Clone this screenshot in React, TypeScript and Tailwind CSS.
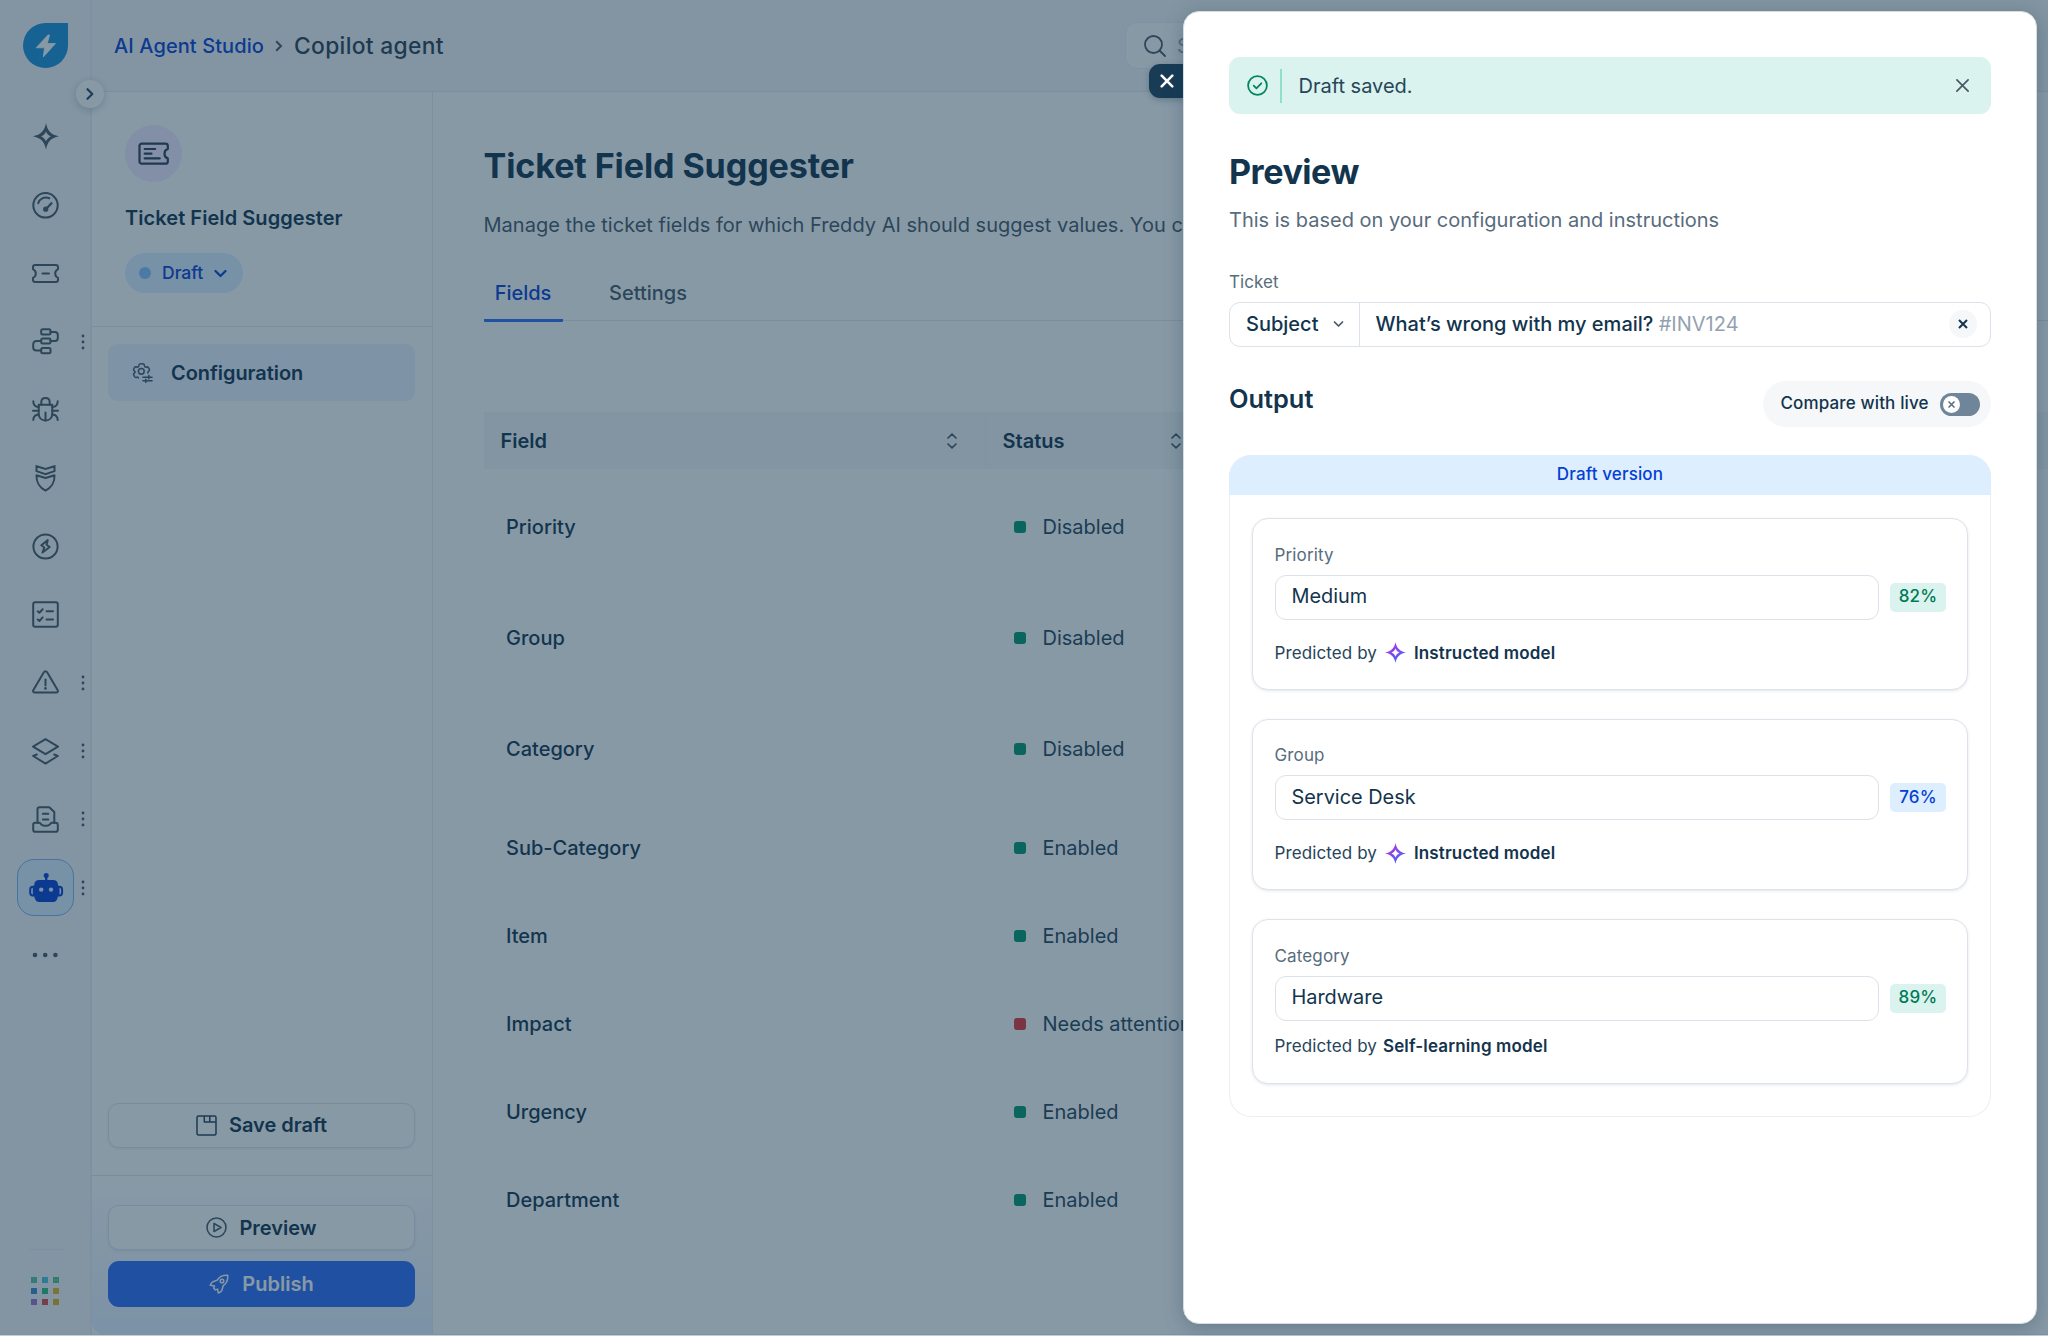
import React from "react";

type IconProps = { className?: string };

function Svg({
  size = 27,
  sw = 2,
  className = "",
  children,
}: {
  size?: number;
  sw?: number;
  className?: string;
  children: React.ReactNode;
}) {
  return (
    <svg
      width={size}
      height={size}
      viewBox={`0 0 ${size} ${size}`}
      fill="none"
      stroke="currentColor"
      strokeWidth={sw}
      strokeLinecap="round"
      strokeLinejoin="round"
      className={`shrink-0 ${className}`}
    >
      {children}
    </svg>
  );
}

const SparkleIcon = () => (
  <Svg>
    <path
      d="M14 0c1.500 8 5 11.800 13.200 13.300-8.200 1.600-11.700 5.400-13.200 13.400C12.500 18.700 9 14.900.8 13.300 9 11.800 12.500 8 14 0zM14 8.500c-1 2.400-2.500 3.900-4.900 4.900 2.400 1 3.900 2.500 4.900 4.900 1-2.400 2.500-3.900 4.900-4.900-2.400-1-3.900-2.500-4.900-4.900z"
      fill="currentColor"
      fillRule="evenodd"
      stroke="none"
    />
  </Svg>
);

const GaugeIcon = () => (
  <Svg>
    <circle cx="13.500" cy="13.300" r="12.200" />
    <path d="M6.200 11.200C7.300 7 12.200 4.300 17.300 6.200" />
    <path d="M14 17l5.500-5.700" strokeWidth="2.300" />
    <circle cx="13.700" cy="17.200" r="2.600" fill="currentColor" stroke="none" />
  </Svg>
);

const TicketIcon = () => (
  <Svg>
    <path d="M3.200 5h20.600c1.300 0 2.200.9 2.200 2.200v1.900c-1.800.9-2.800 2.500-2.800 4.400s1 3.500 2.800 4.400v1.900c0 1.300-.9 2.200-2.200 2.200H3.200C1.900 22 1 21.100 1 19.800v-1.900c1.800-.9 2.800-2.500 2.800-4.400S2.800 10 1 9.100V7.200C1 5.900 1.900 5 3.200 5z" />
    <path d="M10.500 13.500h6.500" />
  </Svg>
);

const WorkflowIcon = () => (
  <Svg>
    <rect x="9.200" y="1.200" width="9.300" height="5.400" rx="1.500" />
    <rect x="9.200" y="10.600" width="9.300" height="5" rx="1.500" />
    <rect x="9.200" y="19.900" width="9.300" height="5.400" rx="1.500" />
    <path d="M18.500 3.900h4.300c1.800 0 3 1.200 3 3v3.200c0 1.800-1.200 3-3 3h-4.300M9.200 13.100H4.500c-2 0-3.300 1.300-3.300 3.300v2.900c0 2 1.300 3.300 3.300 3.300h4.700" />
  </Svg>
);

const BugIcon = () => (
  <Svg>
    <path d="M6.700 8.700h13.600v9c0 4.100-2.900 6.800-6.800 6.800s-6.800-2.700-6.800-6.800z" />
    <path d="M9.300 8.700V6.300c0-2.600 1.700-4.300 4.200-4.300s4.200 1.700 4.200 4.300v2.400" />
    <path d="M13.500 16.500v8M1.300 5.200c0 3.500 2 5.600 5.400 5.900M25.700 5.200c0 3.500-2 5.600-5.400 5.900M1 14.800h5.700M20.300 14.800H26M1.300 24c0-3.200 1.900-5.300 5.400-5.600M25.700 24c0-3.200-1.900-5.300-5.400-5.600" />
  </Svg>
);

const ShieldIcon = () => (
  <Svg>
    <path d="M4.500 1.200L13.500 4l9-2.800v4.900l-9 3-9-3z" strokeLinejoin="miter" />
    <path d="M4.500 10.300l9 2.700 9-2.700c.4 7-3.400 12.700-9 15.300-5.600-2.600-9.400-8.300-9-15.300z" />
  </Svg>
);

const BoltCircleIcon = () => (
  <Svg>
    <circle cx="13.500" cy="13.500" r="12.100" />
    <path d="M15.800 7.100L9.300 12.300l3 2.200-1.800 5 7.200-5.500-3.200-2.200z" />
  </Svg>
);

const ChecklistIcon = () => (
  <Svg>
    <rect x="1.200" y="1.200" width="24.600" height="24.600" rx="2" />
    <path d="M5.700 10.300l1.700 1.500 3.300-3.600M5.700 18.500l1.700 1.500 3.300-3.600M14.500 10.300h6.500M14.500 18.500h6.500" />
  </Svg>
);

const WarningIcon = () => (
  <Svg>
    <path d="M15.300 3.400l10.300 17.500c.8 1.400.1 2.600-1.500 2.600H2.900c-1.600 0-2.300-1.200-1.500-2.600L11.700 3.400c.9-1.500 2.700-1.500 3.600 0z" />
    <path d="M13.500 10.400v6" />
    <circle cx="13.500" cy="19.400" r="1.300" fill="currentColor" stroke="none" />
  </Svg>
);

const LayersIcon = () => (
  <Svg>
    <path d="M13.500 1.200L26 8.700l-12.500 7.500L1 8.700z" />
    <path d="M4.800 16.500L1.200 18l12.300 7.600L25.800 18l-3.600-1.500" />
  </Svg>
);

const TrayIcon = () => (
  <Svg>
    <path d="M5.500 17V3.400C5.500 2 6.300 1.200 7.600 1.200h9.700l5 4.800v11" />
    <path d="M3.300 16.800h4.500c1.500 2 2.500 3 4.500 3h2.500c2 0 3-1 4.500-3h4.400c1.300 0 2.100.8 2.100 2.100v4.800c0 1.300-.8 2.100-2.100 2.100H3.300c-1.300 0-2.100-.8-2.100-2.100v-4.800c0-1.300.8-2.100 2.100-2.100z" />
    <path d="M10.800 7.800h5.500M10.800 13.500h5.500" />
  </Svg>
);

const RobotIcon = () => (
  <svg width="36" height="36" viewBox="0 0 36 36" fill="none" className="shrink-0">
    <circle cx="18.200" cy="5.500" r="2.500" fill="#0440D2" />
    <path d="M18.200 6v6" stroke="#0440D2" strokeWidth="2.400" />
    <path d="M6 16.800H4.800c-1.400 0-2.600 1.100-2.600 2.600v3.400c0 1.400 1.200 2.600 2.600 2.600H6M30.300 16.800h1.200c1.400 0 2.600 1.100 2.600 2.600v3.400c0 1.400-1.200 2.600-2.600 2.600h-1.200" stroke="#0440D2" strokeWidth="2" />
    <path d="M11.200 10h13.900c3 0 4.900 2 4.900 4.700v.8c.9.300 1.500 1 1.500 2v7c0 1-.6 1.700-1.500 2l-.8 2.500c-.7 2-2 3-4 3H11.100c-2 0-3.300-1-4-3l-.8-2.500c-.900-.300-1.500-1-1.500-2v-7c0-1 .6-1.700 1.500-2v-.8C6.300 12 8.200 10 11.200 10z" fill="#0440D2" />
    <circle cx="13.200" cy="19.600" r="2.200" fill="#DDEEFF" />
    <circle cx="23" cy="19.600" r="2.200" fill="#DDEEFF" />
  </svg>
);

const railItems: { icon: React.ReactNode; more?: boolean; active?: boolean }[] = [
  { icon: <SparkleIcon /> },
  { icon: <GaugeIcon /> },
  { icon: <TicketIcon /> },
  { icon: <WorkflowIcon />, more: true },
  { icon: <BugIcon /> },
  { icon: <ShieldIcon /> },
  { icon: <BoltCircleIcon /> },
  { icon: <ChecklistIcon /> },
  { icon: <WarningIcon />, more: true },
  { icon: <LayersIcon />, more: true },
  { icon: <TrayIcon />, more: true },
  { icon: <RobotIcon />, more: true, active: true },
];

const appColors = [
  "bg-[#56C4A4]",
  "bg-[#48C3E4]",
  "bg-[#56C48A]",
  "bg-[#3A88CF]",
  "bg-[#2FBE7E]",
  "bg-[#E5B41C]",
  "bg-[#9E70CE]",
  "bg-[#E0484A]",
  "bg-[#E5AE1C]",
];

function Rail() {
  return (
    <div className="relative flex h-full w-[92px] shrink-0 flex-col border-r-2 border-[#EBEEF5] bg-[#F5F7F7] text-[#475867]">
      <div className="pl-[23px] pt-[23px]">
        <div className="flex h-[45px] w-[45px] items-center justify-center rounded-full rounded-tr-[5px] bg-[#1A90D8]">
          <svg width="22" height="24" viewBox="0 0 22 24">
            <path d="M13 1L1.200 13.800h8.300L8.300 23 20.500 9.500h-8.200L14.500 1z" fill="#fff" stroke="#fff" strokeWidth=".8" strokeLinejoin="round" />
          </svg>
        </div>
      </div>
      <div className="mt-[34.700px]">
        {railItems.map((item, i) => (
          <div key={i} className="relative flex h-[68.270px] items-center pl-[17px]">
            <div
              className={
                item.active
                  ? "flex h-[57px] w-[57px] items-center justify-center rounded-[17px] border border-[#78B4F5] bg-[#DDEEFF]"
                  : "flex h-[57px] w-[57px] items-center justify-center"
              }
            >
              {item.icon}
            </div>
            {item.more && (
              <svg width="4" height="16" viewBox="0 0 4 16" className="ml-[6.500px]">
                <circle cx="2" cy="2" r="1.400" fill="#475867" />
                <circle cx="2" cy="8" r="1.400" fill="#475867" />
                <circle cx="2" cy="14" r="1.400" fill="#475867" />
              </svg>
            )}
          </div>
        ))}
        <div className="flex h-[67px] items-center pl-[32px]">
          <svg width="27" height="6" viewBox="0 0 27 6">
            <circle cx="3" cy="3" r="2.300" fill="#475867" />
            <circle cx="13.200" cy="3" r="2.300" fill="#475867" />
            <circle cx="23.400" cy="3" r="2.300" fill="#475867" />
          </svg>
        </div>
      </div>
      <div className="mb-[30px] mt-auto">
        <div className="ml-[29px] h-px w-[34px] bg-[#E6EBF5]" />
        <div className="ml-[31px] mt-[27px] grid w-[28px] grid-cols-3 gap-[5px]">
          {appColors.map((c, i) => (
            <div key={i} className={`h-[6px] w-[6px] ${c}`} />
          ))}
        </div>
      </div>
      {/* expand handle */}
      <div className="absolute left-[76px] top-[80px] z-10 flex h-[28px] w-[28px] items-center justify-center rounded-full bg-white shadow-[0_2px_8px_rgba(18,52,77,0.25)]">
        <svg width="8" height="12" viewBox="0 0 8 12" fill="none" stroke="#264966" strokeWidth="2.200" strokeLinecap="round" strokeLinejoin="round">
          <path d="M1.500 1.200L6.300 6l-4.800 4.800" />
        </svg>
      </div>
    </div>
  );
}

function Header() {
  return (
    <div className="flex h-[92px] shrink-0 items-center border-b border-[#E6EAF2] bg-[#F5F7F7] pl-[22px]">
      <span className="text-[20px] font-medium leading-[28px] tracking-[0.005em] text-[#0440D2]">AI Agent Studio</span>
      <svg width="8" height="12" viewBox="0 0 8 12" fill="none" stroke="#475867" strokeWidth="2" className="ml-[11px]">
        <path d="M1.200 1.200L6 6l-4.800 4.800" />
      </svg>
      <span className="ml-[11px] text-[22.800px] font-medium leading-[28px] tracking-[0.014em] text-[#2A3F52]">Copilot agent</span>
      <div className="ml-auto mr-[501px] flex h-[47px] w-[422px] items-center rounded-[12px] border border-[#EBEFF3] bg-white pl-[18px]">
        <svg width="22" height="22" viewBox="0 0 22 22" fill="none" stroke="#475867" strokeWidth="1.800" strokeLinecap="round">
          <circle cx="9.500" cy="9.500" r="8.500" />
          <path d="M15.500 15.500L21 21" />
        </svg>
        <span className="ml-[11px] text-[20px] text-[#92A2B1]">Search</span>
      </div>
    </div>
  );
}

function Sidebar() {
  return (
    <div className="flex w-[341px] shrink-0 flex-col border-r border-[#E6EAF2]">
      <div className="h-[235px] shrink-0 border-b border-[#E3E8F1] pl-[33px] pt-[33px]">
        <div className="flex h-[57px] w-[57px] items-center justify-center rounded-full bg-[#F2EBFF]">
          <svg width="32" height="24" viewBox="0 0 32 24" fill="none" stroke="#2A3F52" strokeWidth="2.200" strokeLinecap="round" strokeLinejoin="round">
            <path d="M3.900 1.700h23.500c1.500 0 2.400.9 2.400 2.300v3c-2.200.7-3.300 2.500-3.300 4.700s1.100 4 3.300 4.700v3c0 1.400-.9 2.300-2.400 2.300H3.900c-1.500 0-2.400-.9-2.400-2.300V4c0-1.400.9-2.300 2.400-2.300z" />
            <path d="M6.700 7h10.500M6.700 11.700h6.800M6.700 16.400h15" />
          </svg>
        </div>
        <div className="mt-[22px] text-[20px] font-semibold leading-[28px] tracking-[0.003em] text-[#12344D]">Ticket Field Suggester</div>
        <div className="mt-[21px] flex h-[40px] w-[118px] items-center rounded-full bg-[#DDEEFF] pl-[14px]">
          <div className="h-[12px] w-[12px] rounded-full bg-[#86BFFC]" />
          <span className="ml-[11px] text-[17.500px] font-medium leading-[20px] text-[#0440D2]">Draft</span>
          <svg width="13" height="9" viewBox="0 0 13 9" fill="none" stroke="#0440D2" strokeWidth="2.200" strokeLinecap="round" strokeLinejoin="round" className="ml-[11px]">
            <path d="M1.500 2l5 5 5-5" />
          </svg>
        </div>
      </div>
      <div className="flex grow flex-col pl-4 pr-[17px] pt-[17px]">
        <div className="flex h-[57px] items-center rounded-[9px] bg-[#EAF2FF] pl-[24px]">
          <svg width="21" height="21" viewBox="0 0 21 21" fill="none" stroke="#475867" strokeWidth="1.500" strokeLinecap="round" strokeLinejoin="round">
            <path d="M15.900 11c-.3-.8.1-1.500.8-1.900.8-.400 1-1.200.6-1.900l-.9-1.600c-.4-.7-1.200-.9-2-.5-.8.400-1.700-.1-1.800-1.100-.1-1.300-.8-2.200-2-2.200h-1.900c-1.200 0-1.800.7-1.900 1.900-.1 1-1 1.700-1.900 1.300-1-.5-1.900-.3-2.400.5l-.7 1.300c-.5.9-.2 1.700.6 2.200.9.500.9 1.500 0 2-.9.500-1.100 1.400-.6 2.200l.8 1.400c.5.800 1.200 1 2.200.6.600-.3 1.300.2 1.600.8" />
            <circle cx="9.300" cy="9.300" r="2.900" />
            <path d="M11 15.200h9M11 18.800h9M16.800 13.500v3.300M13.800 17.200v3.200" />
          </svg>
          <span className="ml-[18px] text-[19.900px] font-semibold leading-[28px] text-[#12344D]">Configuration</span>
        </div>
        <button className="mb-[27.500px] mt-auto flex h-[45px] items-center justify-center rounded-[11px] border border-[#DFE5EC] bg-white text-[20px] font-semibold text-[#12344D] shadow-[0_1px_3px_rgba(18,52,77,0.1)]">
          <svg width="21" height="21" viewBox="0 0 21 21" fill="none" stroke="#2A3F52" strokeWidth="1.500" strokeLinejoin="round">
            <rect x="1" y="1" width="19" height="19" rx="1.500" />
            <path d="M8.300 1v6H20M13.800 1v6" />
          </svg>
          <span className="ml-[12px]">Save draft</span>
        </button>
      </div>
      <div className="flex h-[159px] shrink-0 flex-col rounded-bl-[12px] border-t border-[#DCE5EE] bg-gradient-to-b from-white to-[#E6F0FF] pl-4 pr-[17px] pt-[29px]">
        <button className="flex h-[45px] shrink-0 items-center justify-center rounded-[11px] border border-[#DFE5EC] bg-white text-[20px] font-semibold text-[#12344D] shadow-[0_1px_3px_rgba(18,52,77,0.1)]">
          <svg width="21" height="21" viewBox="0 0 21 21" fill="none" stroke="#475867" strokeWidth="1.600" strokeLinejoin="round">
            <circle cx="10.500" cy="10.500" r="9.500" />
            <path d="M8 6.500v8l7-4z" />
          </svg>
          <span className="ml-[12px]">Preview</span>
        </button>
        <button className="mt-[11px] flex h-[46px] shrink-0 items-center justify-center rounded-[11px] bg-[#2C6CF5] text-[20px] font-semibold text-white">
          <svg width="20" height="20" viewBox="0 0 20 20" fill="none" stroke="#fff" strokeWidth="1.500" strokeLinecap="round" strokeLinejoin="round">
            <path d="M18.700 1.300c-4.400-.3-8 .9-10.500 4.800L4 7.700c-1.300.7-2.300 2-2.700 3.600l4.200.6-.8 2.300 1.700 1.700 2.200-.8.600 3.900c1.700-.4 3-1.400 3.700-2.700l1.300-4.600c3.700-2.500 4.900-5.900 4.500-10.400z" />
            <circle cx="13" cy="7" r="1.800" />
          </svg>
          <span className="ml-[13px]">Publish</span>
        </button>
      </div>
    </div>
  );
}

const SortIcon = ({ className }: IconProps) => (
  <svg width="12" height="16" viewBox="0 0 12 16" fill="none" stroke="#475867" strokeWidth="1.700" strokeLinecap="round" strokeLinejoin="round" className={`shrink-0 ${className}`}>
    <path d="M2 5l4-3.800L10 5M2 11l4 3.800 4-3.800" />
  </svg>
);

const fieldRows = [
  { name: "Priority", status: "Disabled", tall: true },
  { name: "Group", status: "Disabled", tall: true },
  { name: "Category", status: "Disabled", tall: true },
  { name: "Sub-Category", status: "Enabled" },
  { name: "Item", status: "Enabled" },
  { name: "Impact", status: "Needs attention", alert: true },
  { name: "Urgency", status: "Enabled" },
  { name: "Department", status: "Enabled" },
];

function Main() {
  return (
    <div className="min-w-0 grow overflow-hidden pl-[50.500px] pt-[52px]">
      <h1 className="text-[34.100px] font-bold leading-[44px] tracking-[-0.003em] text-[#12344D]">Ticket Field Suggester</h1>
      <p className="mt-[23px] whitespace-nowrap text-[20px] leading-[28px] tracking-[0.001em] text-[#475867]">
        Manage the ticket fields for which Freddy AI should suggest values. You can
      </p>
      <div className="mt-[32px] flex h-[50px] border-b border-[#E3E8EE] text-[20px] leading-[28px]">
        <div className="mb-[-1.500px] h-[51px] w-[79px] rounded-b-[1px] border-b-3 border-[#2C6CF5] pt-[8px] text-center font-medium text-[#0440D2]">
          Fields
        </div>
        <div className="ml-[46.500px] pt-[8px] font-medium text-[#475867]">Settings</div>
      </div>
      <div className="mt-[91px] flex h-[57px] items-center bg-[#F5F7F7] text-[20px] font-semibold text-[#12344D]">
        <div className="flex h-full w-[502px] items-center border-r border-[#EFF2F4] pl-[17px]">
          Field
          <SortIcon className="ml-auto mr-[27px]" />
        </div>
        <div className="flex w-[196px] items-center pl-[17px]">
          Status
          <SortIcon className="ml-auto" />
        </div>
      </div>
      <div className="pt-[2.300px]">
        {fieldRows.map((row) => (
          <div
            key={row.name}
            className={`flex items-center text-[20px] text-[#12344D] ${row.tall ? "h-[110.900px]" : "h-[88.100px]"}`}
          >
            <div className="w-[530px] pl-[22.500px] font-medium">{row.name}</div>
            <div className={`h-[12px] w-[12px] rounded-[3px] ${row.alert ? "bg-[#E43538]" : "bg-[#00966F]"}`} />
            <div className="ml-[17px] whitespace-nowrap text-[#264559]">{row.status}</div>
          </div>
        ))}
      </div>
    </div>
  );
}

const GradientSparkle = () => (
  <svg width="21" height="21" viewBox="0 0 27 27" className="shrink-0">
    <defs>
      <linearGradient id="spark" x1="0" y1="0" x2="0.700" y2="1">
        <stop offset="0.300" stopColor="#A23BE0" />
        <stop offset="0.800" stopColor="#5B5BF5" />
      </linearGradient>
    </defs>
    <path
      d="M13.500 0c1.500 8 5.400 11.900 13.500 13.500-8.100 1.600-12 5.500-13.500 13.500C12 19 8.100 15.100 0 13.500 8.100 11.900 12 8 13.500 0zM13.500 8.400c-1 2.500-2.600 4.100-5.100 5.100 2.500 1 4.100 2.600 5.100 5.100 1-2.500 2.600-4.100 5.100-5.100-2.500-1-4.100-2.600-5.100-5.100z"
      fill="url(#spark)"
      fillRule="evenodd"
    />
  </svg>
);

function PredictionCard({
  label,
  value,
  score,
  model,
  instructed,
  blue,
}: {
  label: string;
  value: string;
  score: string;
  model: string;
  instructed?: boolean;
  blue?: boolean;
}) {
  return (
    <div
      className={`rounded-[16px] border-[1.500px] border-[#DDE3EA] bg-white pl-[21.500px] pr-[21px] shadow-[0_1px_3px_rgba(18,52,77,0.12)] ${
        instructed ? "h-[171.500px]" : "h-[164.500px]"
      }`}
    >
      <div className="mt-[23.500px] text-[17px] leading-[24px] tracking-[0.008em] text-[#576C7D]">{label}</div>
      <div className="mt-[8px] flex items-center">
        <div className="flex h-[45px] w-[604.500px] items-center rounded-[11px] border-[1.500px] border-[#DCE2E9] pl-[16px] text-[19.900px] text-[#12344D]">
          {value}
        </div>
        <div
          className={`ml-[11px] flex h-[29px] w-[56px] items-center justify-center rounded-[5px] text-[17px] font-medium tracking-[0.010em] ${
            blue ? "bg-[#DDEEFF] text-[#0440D2]" : "bg-[#DAF3EE] text-[#007A56]"
          }`}
        >
          {score}
        </div>
      </div>
      <div className={`flex items-center text-[17px] leading-[24px] tracking-[0.006em] text-[#264559] ${instructed ? "mt-[21px]" : "mt-[13.500px]"}`}>
        <span>Predicted by</span>
        {instructed ? (
          <span className="mx-[8px] flex">
            <GradientSparkle />
          </span>
        ) : (
          <span className="w-[6px]" />
        )}
        <span className="font-semibold tracking-[0.008em] text-[#12344D]">{model}</span>
      </div>
    </div>
  );
}

function PreviewDrawer() {
  return (
    <div className="absolute left-[1183px] top-[11px] h-[1313px] w-[854px] rounded-[16px] border border-[#D5DDE3] bg-white px-[45px] pt-[45px] shadow-[0_4px_20px_rgba(18,52,77,0.3)]">
      <div className="flex h-[57px] items-center rounded-[11px] bg-[#DAF3EE] pl-[18px] pr-[22px]">
        <svg width="21" height="21" viewBox="0 0 21 21" fill="none" stroke="#00875F" strokeWidth="1.800" strokeLinecap="round" strokeLinejoin="round">
          <circle cx="10.500" cy="10.500" r="9.400" />
          <path d="M6.700 10.700l2.700 2.600 4.900-5" />
        </svg>
        <div className="ml-[12px] h-[34px] w-[1.500px] bg-[#8FE0C4]" />
        <span className="ml-[17px] text-[20px] text-[#264559]">Draft saved.</span>
        <svg width="13" height="13" viewBox="0 0 13 13" fill="none" stroke="#475867" strokeWidth="1.700" strokeLinecap="round" className="ml-auto">
          <path d="M.9.900l11.200 11.200M12.100.9L.9 12.100" />
        </svg>
      </div>
      <h2 className="mt-[36px] text-[34.100px] font-bold leading-[44px] tracking-[-0.014em] text-[#12344D]">Preview</h2>
      <p className="mt-[11.500px] text-[20px] leading-[28px] text-[#576C7D]">
        This is based on your configuration and instructions
      </p>
      <div className="mt-[36px] text-[17px] leading-[24px] tracking-[0.005em] text-[#576C7D]">Ticket</div>
      <div className="mt-[8px] flex h-[45px] items-center rounded-[11px] border-[1.500px] border-[#DCE2E9] text-[20px] font-medium text-[#12344D]">
        <div className="flex h-full w-[130px] items-center border-r-[1.500px] border-[#DCE2E9] pl-[16px]">
          Subject
          <svg width="11" height="8" viewBox="0 0 11 8" fill="none" stroke="#475867" strokeWidth="1.700" strokeLinecap="round" strokeLinejoin="round" className="ml-[15px]">
            <path d="M1.500 2l4 4 4-4" />
          </svg>
        </div>
        <div className="ml-[15.500px] whitespace-pre">
          What’s wrong with my email? <span className="font-normal text-[#92A2B1]">#INV124</span>
        </div>
        <div className="ml-auto mr-[13px] flex h-[28px] w-[28px] items-center justify-center rounded-full bg-[#F5F7F9]">
          <svg width="10" height="10" viewBox="0 0 10 10" fill="none" stroke="#12344D" strokeWidth="2">
            <path d="M1 1l8 8M9 1L1 9" />
          </svg>
        </div>
      </div>
      <div className="mt-[34.500px] flex h-[46px] items-center justify-between">
        <h3 className="mb-[10px] text-[25.400px] font-semibold leading-[32px] text-[#12344D]">Output</h3>
        <div className="flex h-[46px] w-[228px] items-center rounded-full bg-[#F5F7F9] pl-[17.500px] text-[17px] font-medium tracking-[0.008em] text-[#12344D]">
          Compare with live
          <div className="ml-auto mr-[11px] flex h-[23px] w-[40px] items-center rounded-full bg-[#6F8599] pl-[3px]">
            <div className="flex h-[17px] w-[17px] items-center justify-center rounded-full bg-white">
              <svg width="7" height="7" viewBox="0 0 7 7" fill="none" stroke="#576C7D" strokeWidth="1.500">
                <path d="M.5.500l6 6M6.500.5l-6 6" />
              </svg>
            </div>
          </div>
        </div>
      </div>
      <div className="mt-[28px] h-[662px] overflow-hidden rounded-[22px] bg-[#EBEFF3] p-px pt-0">
        <div className="-mx-px flex h-[40px] items-center justify-center bg-[#DDEEFF] text-[17px] font-medium tracking-[0.008em] text-[#0440D2]">
          Draft version
        </div>
        <div className="flex h-[621px] flex-col gap-[29px] rounded-b-[21px] bg-white px-[22px] pt-[23px]">
          <PredictionCard label="Priority" value="Medium" score="82%" model="Instructed model" instructed />
          <PredictionCard label="Group" value="Service Desk" score="76%" model="Instructed model" instructed blue />
          <PredictionCard label="Category" value="Hardware" score="89%" model="Self-learning model" />
        </div>
      </div>
    </div>
  );
}

export default function App() {
  return (
    <div className="relative h-[1336px] w-[2048px] overflow-hidden bg-white font-['Inter',sans-serif] antialiased">
      <div className="flex h-[1335px]">
        <Rail />
        <div className="flex min-w-0 grow flex-col">
          <Header />
          <div className="flex min-h-0 grow border-b border-[#E6F0FF]">
            <Sidebar />
            <Main />
          </div>
        </div>
      </div>

      {/* page dimmer */}
      <div className="absolute inset-x-0 top-0 z-20 h-[1335px] bg-[#12344D]/50" />
      <div className="absolute inset-x-0 bottom-0 z-20 h-px bg-[#C3CDD5]" />

      <div className="absolute inset-0 z-30">
        <button className="absolute left-[1149px] top-[64px] flex h-[34px] w-[36px] items-center rounded-l-[11px] bg-[#183B56] pl-[10.500px] shadow-[0_2px_6px_rgba(18,52,77,0.3)]">
          <svg width="14" height="14" viewBox="0 0 14 14" fill="none" stroke="#fff" strokeWidth="2.600" strokeLinecap="round">
            <path d="M1.700 1.700l10.600 10.600M12.300 1.700L1.700 12.300" />
          </svg>
        </button>
        <PreviewDrawer />
      </div>
    </div>
  );
}
